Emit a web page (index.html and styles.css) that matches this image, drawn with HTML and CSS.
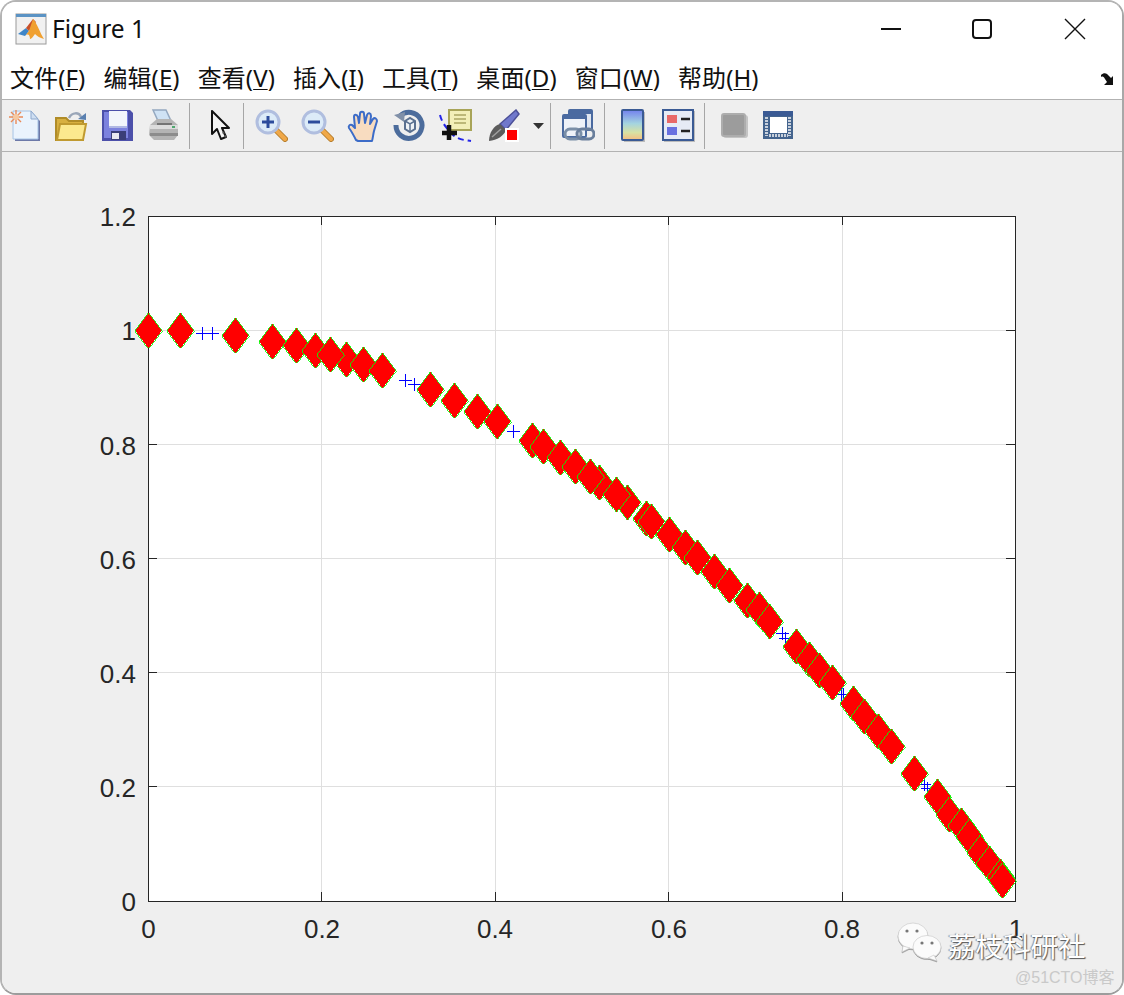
FILE: index.html
```html
<!DOCTYPE html>
<html lang="zh">
<head>
<meta charset="utf-8">
<title>Figure 1</title>
<link rel="stylesheet" href="styles.css">
</head>
<body>
<div class="window">
  <header class="titlebar">
    <svg class="app-icon" viewBox="0 0 32 32" aria-hidden="true">
      <rect x="1" y="1" width="30" height="30" fill="#f1f1f1" stroke="#9a9a9a"/>
      <rect x="1" y="1" width="30" height="3" fill="#5b93c4"/>
      <path d="M3 21L11 15L14 18L10 23Z" fill="#3f86c8"/>
      <path d="M11 15L18 6L21 9L14 18Z" fill="#c8502a"/>
      <path d="M18 6C22 10 25 20 29 26C25 25 22 23 20 21C18 24 16 26 15 26C15 22 13 20 10 23L14 18Z" fill="#f0a030"/>
    </svg>
    <span class="title-text">Figure 1</span>
    <div class="win-controls">
      <svg class="win-btn" viewBox="0 0 20 20" aria-hidden="true"><path d="M0 10H20" class="win-stroke"/></svg>
      <svg class="win-btn" viewBox="0 0 20 20" aria-hidden="true"><rect x="1" y="1" width="18" height="18" rx="3" class="win-stroke"/></svg>
      <svg class="win-btn" viewBox="0 0 20 20" aria-hidden="true"><path d="M0 0L20 20M20 0L0 20" class="win-thin"/></svg>
    </div>
  </header>

  <nav class="menubar">
    <span class="menu-item">文件(<u>F</u>)</span>
    <span class="menu-item">编辑(<u>E</u>)</span>
    <span class="menu-item">查看(<u>V</u>)</span>
    <span class="menu-item">插入(<u>I</u>)</span>
    <span class="menu-item">工具(<u>T</u>)</span>
    <span class="menu-item">桌面(<u>D</u>)</span>
    <span class="menu-item">窗口(<u>W</u>)</span>
    <span class="menu-item">帮助(<u>H</u>)</span>
    <svg class="dock" viewBox="0 0 16 14" aria-hidden="true"><path d="M1 3C4 0 7 1 9 4L11 6L13 4V13H4L7 10L5 7C4 5 3 4 1 5Z" fill="#111"/></svg>
  </nav>

  <div class="toolbar">
    <span class="tool"><svg class="ico" viewBox="0 0 33 33"><path d="M6 4H23L31 12V32H6Z" fill="#6d79a8"/><path d="M4 2H22L29 10V30H4Z" fill="#eaf3fd" stroke="#a6c4e6"/><path d="M22 2V10H29Z" fill="#cfdff2" stroke="#8fa8cc"/><path d="M7 1V15M0 8H14M2 3L12 13M12 3L2 13" stroke="#ea8a58" stroke-width="1.4"/><circle cx="7" cy="8" r="3" fill="#f6c8a0"/></svg></span>
    <span class="tool"><svg class="ico" viewBox="0 0 33 33"><path d="M14 9C17 3 24 3 26 8" fill="none" stroke="#9aa6b8" stroke-width="2.5"/><path d="M23 10L31 4V11Z" fill="#5a80b0"/><path d="M1 9H11L14 12H28V31H1Z" fill="#d8b040" stroke="#b08c28" stroke-width="2"/><path d="M2 31L5 15H31L28 31Z" fill="#fce98e" stroke="#c09a30" stroke-width="2"/></svg></span>
    <span class="tool"><svg class="ico" viewBox="0 0 33 33"><path d="M1 1H29L32 4V32H1Z" fill="#4c50aa"/><path d="M3 3H27V29H3Z" fill="#7c82de"/><path d="M8 2H26V17H8Z" fill="#f2f5fb"/><path d="M8 17H26V19H8Z" fill="#b0b8e4"/><path d="M10 22H25V31H10Z" fill="#3a3e78"/><rect x="11" y="24" width="7" height="6" fill="#e8e8f0"/></svg></span>
    <span class="tool"><svg class="ico" viewBox="0 0 33 33"><path d="M6 1H19L25 14H12Z" fill="#cfe2f4" stroke="#94a8c0" stroke-width="1.5"/><path d="M3 16L10 10H24L31 16V26L27 31H7L2 26Z" fill="#b4b4b4"/><path d="M3 16H31V20H3Z" fill="#dcdcdc"/><path d="M3 24H31V27H3Z" fill="#8c8c8c"/><path d="M10 14H25V16H10Z" fill="#747474"/><rect x="25" y="17" width="3" height="2" fill="#50a870"/></svg></span>
    <span class="sep sep-a"></span>
    <span class="tool"><svg class="ico ico-sharp" viewBox="0 0 33 33"><path d="M8 2V25L13 20L17 30L22 28L18 19L25 19Z" fill="#f4f4f4" stroke="#111" stroke-width="2" stroke-linejoin="round"/><path d="M19 23L23 30" stroke="#555" stroke-width="2" stroke-dasharray="2 2"/></svg></span>
    <span class="sep sep-b"></span>
    <span class="tool"><svg class="ico" viewBox="0 0 33 33"><path d="M19 19L30 30" stroke="#b88030" stroke-width="6" stroke-linecap="round"/><path d="M19 19L30 30" stroke="#f0a848" stroke-width="4" stroke-linecap="round"/><circle cx="13" cy="13" r="11" fill="#dcebf8" stroke="#b0bedf" stroke-width="3"/><path d="M13 7V19M7 13H19" stroke="#2c4c9c" stroke-width="3"/></svg></span>
    <span class="tool"><svg class="ico" viewBox="0 0 33 33"><path d="M19 19L30 30" stroke="#b88030" stroke-width="6" stroke-linecap="round"/><path d="M19 19L30 30" stroke="#f0a848" stroke-width="4" stroke-linecap="round"/><circle cx="13" cy="13" r="11" fill="#dcebf8" stroke="#b0bedf" stroke-width="3"/><path d="M7 13H19" stroke="#2c4c9c" stroke-width="3"/></svg></span>
    <span class="tool"><svg class="ico" viewBox="0 0 33 33"><path d="M9 31C7 27 5 23 2 19C1 17 3 15 5 16L8 19L7 8C7 5 10 5 11 8L12 14L13 5C13 2 17 2 17 5L18 14L20 6C21 3 24 4 24 7L23 15L26 10C28 8 30 10 30 12L27 22C26 26 26 29 25 32H11Z" fill="#f8dcc0" stroke="#3c6cc8" stroke-width="2" stroke-linejoin="round"/></svg></span>
    <span class="tool"><svg class="ico" viewBox="0 0 33 33"><path d="M7 7A13 13 0 1 1 3 16" fill="none" stroke="#4c6c9c" stroke-width="5"/><path d="M1 6L12 3L11 13Z" fill="#8090a8"/><path d="M12 12L17 9L22 12V20L17 23L12 20Z" fill="#eef2f6" stroke="#5a7090" stroke-width="2"/><path d="M12 12L17 15L22 12M17 15V23" fill="none" stroke="#5a7090" stroke-width="1.5"/></svg></span>
    <span class="tool"><svg class="ico" viewBox="0 0 33 33"><rect x="10" y="1" width="22" height="20" fill="#f2efb8" stroke="#a8a458" stroke-width="2"/><path d="M15 6H27M15 10H27M15 14H27" stroke="#bcb878" stroke-width="2"/><path d="M1 6C3 14 8 20 14 26C20 31 26 31 32 32" fill="none" stroke="#2424e8" stroke-width="2" stroke-dasharray="6 4"/><path d="M10 16V31M3 24H18" stroke="#111" stroke-width="4.5"/></svg></span>
    <span class="tool tool-brush"><svg class="ico" viewBox="0 0 33 33"><path d="M13 15L29 1L32 5L19 21Z" fill="#7078cc" stroke="#4c5098" stroke-width="1.5"/><path d="M2 32C2 24 7 16 13 15L19 21C17 27 10 31 2 32Z" fill="#5c5c5c"/><path d="M5 28L14 20" stroke="#a0a0a0" stroke-width="1.5"/><rect x="18" y="19" width="14" height="14" fill="#fff"/><rect x="20" y="21" width="10" height="10" fill="#f00"/></svg></span>
    <span class="tool tool-caret"><svg class="caret" viewBox="0 0 11 6"><path d="M0 0H11L5.5 6Z" fill="#333"/></svg></span>
    <span class="sep sep-c"></span>
    <span class="tool"><svg class="ico" viewBox="0 0 33 33"><rect x="7" y="1" width="23" height="20" rx="1" fill="#dfe6f0" stroke="#4a6aa0" stroke-width="2"/><rect x="7" y="1" width="23" height="4" fill="#4a6aa0"/><rect x="1" y="6" width="23" height="22" rx="1" fill="#eef2f8" stroke="#4a6aa0" stroke-width="2"/><rect x="1" y="6" width="23" height="4" fill="#4a6aa0"/><rect x="3" y="20" width="16" height="10" rx="5" fill="none" stroke="#7a8fa8" stroke-width="3"/><rect x="15" y="20" width="17" height="10" rx="5" fill="none" stroke="#6a7f9c" stroke-width="3"/></svg></span>
    <span class="sep sep-d"></span>
    <span class="tool"><svg class="ico" viewBox="0 0 33 33"><defs><linearGradient id="cbar" x1="0" y1="0" x2="0" y2="1"><stop offset="0" stop-color="#7280ee"/><stop offset=".45" stop-color="#a4d4e0"/><stop offset=".75" stop-color="#d8e2a4"/><stop offset="1" stop-color="#f6bc80"/></linearGradient></defs><rect x="8" y="3" width="21" height="30" fill="#bbb"/><rect x="6" y="1" width="21" height="30" rx="1" fill="url(#cbar)" stroke="#3a5a94" stroke-width="2"/></svg></span>
    <span class="tool"><svg class="ico" viewBox="0 0 33 33"><rect x="2" y="2" width="31" height="31" fill="#bbb"/><rect x="1" y="1" width="30" height="30" fill="#e6ebf5" stroke="#3a5a94" stroke-width="2"/><rect x="5" y="6" width="10" height="8" fill="#e86868"/><rect x="5" y="18" width="10" height="8" fill="#6870e0"/><path d="M19 10H28M19 22H28" stroke="#222" stroke-width="2.5"/></svg></span>
    <span class="sep sep-e"></span>
    <span class="tool"><svg class="ico" viewBox="0 0 33 33"><rect x="6" y="6" width="25" height="23" rx="3" fill="#c4c4c4"/><rect x="5" y="5" width="23" height="22" rx="2" fill="#9c9c9c" stroke="#adadad" stroke-width="2"/></svg></span>
    <span class="tool tool-last"><svg class="ico" viewBox="0 0 33 33"><rect x="2" y="2" width="30" height="28" fill="#44648e"/><rect x="2" y="2" width="30" height="5" fill="#3a5a94"/><rect x="9" y="8" width="17" height="16" fill="#fff"/><path d="M5.5 8V27M28.5 8V27M8 26.5H27" stroke="#c8d0dc" stroke-width="3" stroke-dasharray="2 1"/></svg></span>
  </div>

  <main class="figure">
    <svg class="plot" viewBox="2 152 1120 841" role="img" aria-label="散点图">
      <defs>
        <polygon id="d" points="0,-17.7 13.5,0 0,17.7 -13.5,0" class="diamond"/>
        <path id="p" d="M-6.5 0H6.5M0 -6.5V6.5" class="plus"/>
      </defs>
      <rect x="148.5" y="216.5" width="867" height="685" class="plot-bg"/>
      <g class="grid">
        <path d="M321.5 216V901M495.5 216V901M668.5 216V901M842.5 216V901"/>
        <path d="M148 330.5H1015M148 444.5H1015M148 558.5H1015M148 672.5H1015M148 786.5H1015"/>
      </g>
      <g class="ticks">
        <path d="M321.5 216v9M495.5 216v9M668.5 216v9M842.5 216v9M321.5 901v-9M495.5 901v-9M668.5 901v-9M842.5 901v-9"/>
        <path d="M148 330.5h9M148 444.5h9M148 558.5h9M148 672.5h9M148 786.5h9M1015 330.5h-9M1015 444.5h-9M1015 558.5h-9M1015 672.5h-9M1015 786.5h-9"/>
        <rect x="148.5" y="216.5" width="867" height="685" class="box"/>
      </g>
      <g class="labels y-labels">
        <text x="136" y="226">1.2</text>
        <text x="136" y="340">1</text>
        <text x="136" y="455">0.8</text>
        <text x="136" y="569">0.6</text>
        <text x="136" y="683">0.4</text>
        <text x="136" y="797">0.2</text>
        <text x="136" y="911">0</text>
      </g>
      <g class="labels x-labels">
        <text x="148.5" y="938">0</text>
        <text x="322" y="938">0.2</text>
        <text x="495" y="938">0.4</text>
        <text x="669" y="938">0.6</text>
        <text x="842" y="938">0.8</text>
        <text x="1016" y="938">1</text>
      </g>
      <g class="markers">
        <use href="#p" x="202.5" y="333"/><use href="#p" x="212.5" y="333"/>
        <use href="#p" x="405.5" y="380"/><use href="#p" x="414.5" y="384"/>
        <use href="#p" x="513.5" y="431"/>
        <use href="#p" x="782.5" y="633"/><use href="#p" x="785.5" y="638"/>
        <use href="#p" x="841.5" y="694"/><use href="#p" x="843.5" y="694"/>
        <use href="#p" x="924.5" y="784"/><use href="#p" x="927.5" y="788"/>
        <use href="#d" x="148.5" y="330.5"/><use href="#d" x="180.5" y="330.5"/>
        <use href="#d" x="235.5" y="335.5"/><use href="#d" x="272.5" y="341.5"/>
        <use href="#d" x="296.5" y="345.5"/><use href="#d" x="315.5" y="350.5"/>
        <use href="#d" x="346.5" y="359.5"/><use href="#d" x="330.5" y="354.5"/>
        <use href="#d" x="363.5" y="364.5"/><use href="#d" x="382.5" y="370.5"/>
        <use href="#d" x="430.5" y="389.5"/><use href="#d" x="454.5" y="400.5"/>
        <use href="#d" x="477.5" y="411.5"/><use href="#d" x="497.5" y="421.5"/>
        <use href="#d" x="532.5" y="440.5"/><use href="#d" x="543.5" y="446.5"/>
        <use href="#d" x="560.5" y="457.5"/><use href="#d" x="575.5" y="466.5"/>
        <use href="#d" x="599.5" y="482.5"/><use href="#d" x="590.5" y="476.5"/>
        <use href="#d" x="627.5" y="502.5"/><use href="#d" x="616.5" y="494.5"/>
        <use href="#d" x="646.5" y="518.5"/><use href="#d" x="651.5" y="521.5"/>
        <use href="#d" x="669.5" y="534.5"/><use href="#d" x="685.5" y="547.5"/>
        <use href="#d" x="697.5" y="557.5"/><use href="#d" x="714.5" y="571.5"/>
        <use href="#d" x="729.5" y="585.5"/><use href="#d" x="747.5" y="600.5"/>
        <use href="#d" x="759.5" y="609.5"/><use href="#d" x="769.5" y="621.5"/>
        <use href="#d" x="796.5" y="646.5"/><use href="#d" x="809.5" y="659.5"/>
        <use href="#d" x="819.5" y="670.5"/><use href="#d" x="832.5" y="682.5"/>
        <use href="#d" x="853.5" y="703.5"/><use href="#d" x="864.5" y="716.5"/>
        <use href="#d" x="878.5" y="731.5"/><use href="#d" x="891.5" y="746.5"/>
        <use href="#d" x="914.5" y="773.5"/><use href="#d" x="937.5" y="796.5"/>
        <use href="#d" x="949.5" y="814.5"/><use href="#d" x="961.5" y="825.5"/>
        <use href="#d" x="969.5" y="836.5"/><use href="#d" x="980.5" y="852.5"/>
        <use href="#d" x="989.5" y="863.5"/><use href="#d" x="1000.5" y="876.5"/>
        <use href="#d" x="1002.5" y="880.5"/>
      </g>
    </svg>
    <div class="watermark">
      <svg class="wechat" viewBox="0 0 46 40" aria-hidden="true">
        <ellipse cx="16" cy="14" rx="15" ry="13" class="bubble"/>
        <path d="M6 24L5 30L13 26Z" class="bubble"/>
        <ellipse cx="30" cy="25" rx="14" ry="11.5" class="bubble"/>
        <path d="M37 33L40 39L31 36Z" class="bubble"/>
        <circle cx="10" cy="9" r="1.6" class="eye"/><circle cx="20" cy="9" r="1.6" class="eye"/>
        <circle cx="25" cy="21" r="1.6" class="eye"/><circle cx="35" cy="21" r="1.6" class="eye"/>
      </svg>
      <span class="wm-name">荔枝科研社</span>
    </div>
    <span class="credit">@51CTO博客</span>
  </main>
</div>
</body>
</html>
```
FILE: styles.css
```css
* { box-sizing: border-box; }
html, body { margin: 0; padding: 0; background: #fff; }
body { width: 1124px; height: 995px; overflow: hidden; font-family: "Noto Sans", "Noto Sans CJK SC", sans-serif; color: #111; }

.window {
  width: 1124px; height: 995px;
  display: flex; flex-direction: column;
  border: 2px solid #b4b4b4;
  border-bottom-color: #9c9c9c;
  border-right-color: #a8a8a8;
  border-radius: 16px;
  overflow: hidden;
  background: #fff;
}

.titlebar { height: 58px; flex: none; display: flex; align-items: center; padding: 0 0 4px 13px; background: #fff; }
.app-icon { width: 32px; height: 32px; flex: none; }
.title-text { margin-left: 5px; font-size: 24.5px; line-height: 30px; color: #111; }
.win-controls { margin-left: auto; display: flex; gap: 71px; margin-right: 37px; }
.win-btn { width: 20px; height: 20px; overflow: visible; }
.win-btn:nth-child(2) { margin-right: 2px; }
.win-stroke { fill: none; stroke: #111; stroke-width: 2; }
.win-thin { fill: none; stroke: #111; stroke-width: 1.4; }

.menubar { height: 39px; flex: none; display: flex; align-items: center; padding: 0 6px 3px 8px; gap: 18px; font-size: 24px; background: #fff; white-space: nowrap; }
.menu-item { font-family: "Noto Sans", "Noto Sans CJK SC", sans-serif; line-height: 30px; color: #111; letter-spacing: .1px; }
.menu-item u { text-underline-offset: 2px; text-decoration-thickness: 1px; }
.dock { width: 16px; height: 14px; margin-left: auto; margin-top: 1px; }

.toolbar { height: 53px; flex: none; display: flex; align-items: center; background: #efefef; border-top: 1px solid #b2b2b2; border-bottom: 1px solid #b2b2b2; }
.tool { width: 46px; height: 44px; flex: none; display: flex; align-items: center; justify-content: center; }
.ico { width: 33px; height: 33px; filter: blur(.7px); flex: none; }
.ico-sharp { filter: blur(.45px); }
.tool-brush { margin-left: 2px; }
.tool-caret { width: 24px; }
.tool-last { width: 42px; }
.caret { width: 11px; height: 6px; }
.sep { width: 1px; height: 46px; flex: none; background: #a6a6a6; }
.sep-a { margin: 0 7px 0 3px; }
.sep-b { margin: 0 4px 0 0; }
.sep-c { margin: 0 4px 0 0; }
.sep-d { margin: 0 4px 0 3px; }
.sep-e { margin: 0 5px 0 3px; }

.figure { flex: 1; position: relative; background: #efefef; min-height: 0; }
.plot { display: block; width: 1120px; height: 841px; }
.plot-bg { fill: #fff; }
.grid path { fill: none; stroke: #dfdfdf; stroke-width: 1; }
.ticks path { fill: none; stroke: #262626; stroke-width: 1; }
.box { fill: none; stroke: #262626; stroke-width: 1; }
.labels text { font-family: "Liberation Sans", Arial, sans-serif; font-size: 26px; fill: #262626; }
.y-labels text { text-anchor: end; }
.x-labels text { text-anchor: middle; }
.diamond { fill: #f00; stroke: #0f0; stroke-width: .85; shape-rendering: crispEdges; }
.plus { fill: none; stroke: #00f; stroke-width: 1; shape-rendering: crispEdges; }

.watermark { position: absolute; left: 895px; top: 769px; display: flex; align-items: center; gap: 5px; }
.wechat { width: 46px; height: 40px; flex: none; filter: drop-shadow(0 1px 0 #9a9a9a); }
.bubble { fill: #fbfbfb; stroke: #c4c4c4; stroke-width: .6; }
.eye { fill: #777; }
.wm-name { font-family: "Noto Sans CJK SC", sans-serif; font-size: 27.5px; line-height: 36px; color: #fff; text-shadow: 1px 1px 1px #555, -1px 0 1px #888; margin-top: 6px; }
.credit { position: absolute; left: 1013px; top: 815px; font-family: "Liberation Sans", "Noto Sans CJK SC", sans-serif; font-size: 16px; line-height: 22px; color: #c9c9c9; white-space: nowrap; }
```
